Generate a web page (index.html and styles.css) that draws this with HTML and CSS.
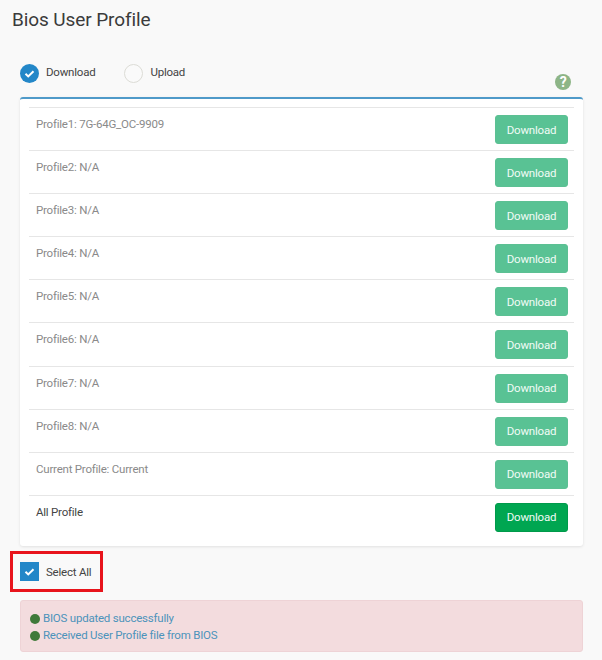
FILE: index.html
```html
<!DOCTYPE html>
<html lang="en">
<head>
<meta charset="utf-8">
<title>Bios User Profile</title>
<link rel="stylesheet" href="styles.css">
</head>
<body>
<h1 class="title">Bios User Profile</h1>
<div class="modes">
  <label class="mode">
    <span class="radio radio-on"><svg viewBox="0 0 18 18" class="tick"><path d="M5.2 9.3l2.6 2.5 5-5" /></svg></span>
    <span>Download</span>
  </label>
  <label class="mode">
    <span class="radio"></span>
    <span>Upload</span>
  </label>
  <span class="help">?</span>
</div>
<section class="card">
  <div class="row"><span class="name">Profile1: 7G-64G_OC-9909</span><button class="btn">Download</button></div>
  <div class="row"><span class="name">Profile2: N/A</span><button class="btn">Download</button></div>
  <div class="row"><span class="name">Profile3: N/A</span><button class="btn">Download</button></div>
  <div class="row"><span class="name">Profile4: N/A</span><button class="btn">Download</button></div>
  <div class="row"><span class="name">Profile5: N/A</span><button class="btn">Download</button></div>
  <div class="row"><span class="name">Profile6: N/A</span><button class="btn">Download</button></div>
  <div class="row"><span class="name">Profile7: N/A</span><button class="btn">Download</button></div>
  <div class="row"><span class="name">Profile8: N/A</span><button class="btn">Download</button></div>
  <div class="row"><span class="name">Current Profile: Current</span><button class="btn">Download</button></div>
  <div class="row"><span class="name name-all">All Profile</span><button class="btn btn-all">Download</button></div>
</section>
<div class="select-wrap">
  <label class="select-all">
    <span class="check"><svg viewBox="0 0 18 18" class="tick"><path d="M5.2 9.3l2.6 2.5 5-5" /></svg></span>
    <span>Select All</span>
  </label>
</div>
<div class="alert">
  <div class="msg"><span class="dot"></span>BIOS updated successfully</div>
  <div class="msg"><span class="dot"></span>Received User Profile file from BIOS</div>
</div>
</body>
</html>
```
FILE: styles.css
```css
* { box-sizing: border-box; }
html, body { height: 100%; }
body {
  margin: 0;
  padding: 0 19px 0 20px;
  background: #f9f9f9;
  font-family: Roboto, "Noto Sans", sans-serif;
  font-size: 11.5px;
  letter-spacing: -0.22px;
  color: #444;
  overflow: hidden;
}
.title {
  margin: 0 0 0 -8px;
  padding-top: 6px;
  height: 53px;
  font-size: 19px;
  letter-spacing: -0.1px;
  line-height: 28px;
  font-weight: 400;
  color: #3b3b3b;
}
.modes {
  display: flex;
  align-items: flex-start;
  height: 44px;
  padding-top: 11px;
  position: relative;
}
.mode {
  display: flex;
  align-items: flex-start;
  gap: 7px;
  margin-right: 29px;
  line-height: 16px;
  height: 19px;
}
.radio {
  width: 19px;
  height: 19px;
  border-radius: 50%;
  border: 1px solid #dcdcd6;
  background: #fafafa;
  display: block;
}
.radio-on {
  border: 0;
  background: #2387c8;
}
.tick { display: block; width: 100%; height: 100%; }
.tick path { fill: none; stroke: #fff; stroke-width: 1.9; }
.help {
  position: absolute;
  right: 12px;
  top: 21px;
  width: 16px;
  height: 16px;
  border-radius: 50%;
  background: #8db587;
  color: #fff;
  font-size: 14px;
  font-weight: 700;
  line-height: 16px;
  text-align: center;
}
.card {
  background: #fff;
  border-top: 2px solid #4f9ac9;
  border-radius: 3px;
  box-shadow: 0 1px 3px rgba(0, 0, 0, .1);
  padding: 8px 9px 0;
  height: 449px;
}
.row {
  display: flex;
  justify-content: space-between;
  align-items: flex-start;
  height: 43.1px;
  border-top: 1px solid #e6e6e6;
  padding: 7px 6px 0 7px;
}
.name { color: #8a8a8a; line-height: 18px; }
.name-all { color: #444; }
.btn {
  width: 73px;
  height: 29px;
  padding: 0;
  border: 1px solid #5cc093;
  border-radius: 3px;
  background: #59c294;
  color: #f1fbf6;
  font: inherit;
  letter-spacing: inherit;
}
.btn-all { background: #00a651; border-color: #009a4b; }
.select-wrap { height: 54px; padding-top: 5px; }
.select-all {
  display: flex;
  align-items: center;
  gap: 7px;
  width: 93px;
  height: 41px;
  margin-left: -10px;
  padding-left: 7px;
  border: 3px solid #e8141c;
}
.check {
  width: 19px;
  height: 19px;
  background: #2387c8;
  display: block;
}
.alert {
  height: 52px;
  background: #f3dcde;
  border: 1px solid #eed3d6;
  border-radius: 3px;
  padding: 9px 9px 0;
  color: #4c93bb;
  line-height: 17px;
}
.msg { display: flex; align-items: center; }
.dot {
  width: 10px;
  height: 10px;
  border-radius: 50%;
  background: #3f7a3a;
  margin-right: 3px;
}
```
